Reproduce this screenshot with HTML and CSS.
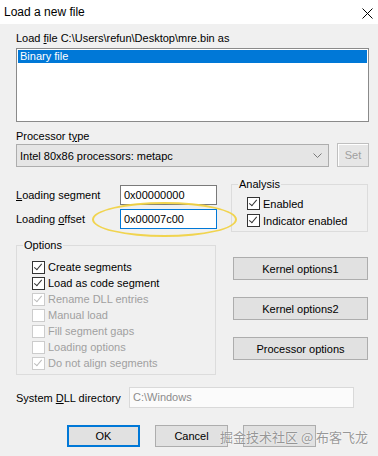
FILE: index.html
```html
<!DOCTYPE html>
<html lang="en">
<head>
  <meta charset="UTF-8">
  <title>Load a new file</title>
  <link rel="stylesheet" href="styles.css">
</head>
<body>
  <div class="dialog">
    <div class="titlebar">
      <span class="title">Load a new file</span>
      <svg class="close" width="11" height="11" viewBox="0 0 11 11"><path d="M0.5 0.5 L10.5 10.5 M10.5 0.5 L0.5 10.5" stroke="#000" stroke-width="1"/></svg>
    </div>
    <div class="content">
      <div class="label file-label">Load <u>f</u>ile C:\Users\refun\Desktop\mre.bin as</div>
      <div class="listbox">
        <div class="list-item selected">Binary file</div>
      </div>

      <div class="label proc-label">Processor t<u>y</u>pe</div>
      <div class="proc-row">
        <div class="combo">
          <span>Intel 80x86 processors: metapc</span>
          <svg width="9" height="5" viewBox="0 0 9 5"><path d="M0.5 0.5 L4.5 4.5 L8.5 0.5" fill="none" stroke="#7a7a7a"/></svg>
        </div>
        <button class="btn btn-set" disabled>Set</button>
      </div>

      <div class="middle">
        <div class="fields">
          <div class="field-row">
            <span class="field-label"><u>L</u>oading segment</span>
            <div class="textbox">0x00000000</div>
          </div>
          <div class="field-row">
            <span class="field-label">Loading <u>o</u>ffset</span>
            <div class="textbox focused">0x00007c00</div>
          </div>
        </div>
        <div class="group analysis">
          <div class="group-title">Analysis</div>
          <div class="group-body">
            <div class="check-row"><span class="check on"></span>Enabled</div>
            <div class="check-row"><span class="check on"></span>Indicator enabled</div>
          </div>
        </div>
      </div>

      <div class="options-row">
        <div class="group options">
          <div class="group-title">Options</div>
          <div class="group-body">
            <div class="check-row"><span class="check on"></span>Create segments</div>
            <div class="check-row"><span class="check on"></span>Load as code segment</div>
            <div class="check-row disabled"><span class="check on"></span>Rename DLL entries</div>
            <div class="check-row disabled"><span class="check"></span>Manual load</div>
            <div class="check-row disabled"><span class="check"></span>Fill segment gaps</div>
            <div class="check-row disabled"><span class="check"></span>Loading options</div>
            <div class="check-row disabled"><span class="check on"></span>Do not align segments</div>
          </div>
        </div>
        <div class="side-buttons">
          <button class="btn btn-side">Kernel options1</button>
          <button class="btn btn-side">Kernel options2</button>
          <button class="btn btn-side">Processor options</button>
        </div>
      </div>

      <div class="dll-row">
        <span class="field-label">System <u>D</u>LL directory</span>
        <div class="textbox readonly">C:\Windows</div>
      </div>

      <div class="actions">
        <button class="btn btn-action default">OK</button>
        <button class="btn btn-action">Cancel</button>
        <button class="btn btn-action" aria-label="Help"></button>
      </div>
    </div>

    <div class="highlight"></div>
    <div class="watermark">掘金技术社区 @ 布客飞龙</div>
  </div>
</body>
</html>
```

FILE: styles.css
```css
:root {
  --face: #f0f0f0;
  --btn-bg: #e1e1e1;
  --btn-border: #adadad;
  --accent: #0078d7;
  --group-border: #dcdcdc;
  --disabled: #a0a0a0;
}
body {
  margin: 0;
  width: 378px;
  height: 456px;
  overflow: hidden;
  background: var(--face);
  font-family: "Liberation Sans", Arial, sans-serif;
  font-size: 11px;
  color: #000;
}
.dialog {
  position: relative;
  height: 456px;
}
.titlebar {
  height: 24px;
  background: #fff;
  display: flex;
  align-items: center;
  justify-content: space-between;
  padding: 0 5px 0 4px;
}
.title {
  font-size: 12px;
  padding-bottom: 1px;
}
.close {
  display: block;
  margin-top: 2px;
}
.content {
  padding: 0 9px 0 16px;
}
.label {
  line-height: 14px;
}
.file-label {
  margin-top: 7px;
}
.listbox {
  margin-top: 3px;
  height: 70px;
  background: #fff;
  border: 1px solid #8a8a8a;
  padding: 1px;
}
.list-item {
  height: 13px;
  line-height: 13px;
  padding-left: 2px;
}
.list-item.selected {
  background: var(--accent);
  color: #fff;
}
.proc-label {
  margin-top: 7px;
}
.proc-row {
  display: flex;
  align-items: flex-start;
  margin-top: 1px;
}
.combo {
  width: 313px;
  height: 23px;
  box-sizing: border-box;
  background: #e5e5e5;
  border: 1px solid var(--btn-border);
  display: flex;
  align-items: center;
  justify-content: space-between;
  padding: 0 6px 0 3px;
}
.btn {
  font-family: inherit;
  font-size: 11px;
  color: #000;
  background: var(--btn-bg);
  border: 1px solid var(--btn-border);
  padding: 0;
  margin: 0;
  box-sizing: border-box;
}
.btn-set {
  margin-left: 8px;
  width: 32px;
  height: 24px;
  margin-top: -1px;
  background: #e6e6e6;
  border-color: #bfbfbf;
  color: var(--disabled);
  box-shadow: inset 1px 1px 0 #fff;
}
.middle {
  display: flex;
  align-items: flex-start;
  margin-top: 17px;
}
.fields {
  padding-top: 1px;
  display: flex;
  flex-direction: column;
  gap: 4px;
}
.field-row {
  display: flex;
  align-items: center;
  height: 20px;
}
.field-label {
  width: 104px;
}
.textbox {
  width: 97px;
  height: 20px;
  box-sizing: border-box;
  background: #fff;
  border: 1px solid #7a7a7a;
  padding-left: 3px;
  line-height: 18px;
}
.textbox.focused {
  border-color: var(--accent);
}
.group {
  border: 1px solid var(--group-border);
  box-sizing: border-box;
}
.group-title {
  width: fit-content;
  margin: -8px 0 0 6px;
  padding: 0 1px;
  line-height: 14px;
  background: var(--face);
}
.analysis {
  width: 137px;
  margin-left: auto;
  margin-right: 1px;
}
.analysis .group-body {
  padding: 4px 0 2px 15px;
}
.check-row {
  display: flex;
  align-items: center;
  height: 17px;
}
.check {
  width: 13px;
  height: 13px;
  box-sizing: border-box;
  border: 1px solid #333;
  background: #fff;
  margin-right: 3px;
  position: relative;
}
.check.on::after {
  content: "";
  position: absolute;
  left: 3px;
  top: 0px;
  width: 3px;
  height: 7px;
  border: solid #333;
  border-width: 0 1px 1px 0;
  transform: rotate(40deg);
}
.check-row.disabled {
  color: var(--disabled);
}
.check-row.disabled .check {
  border-color: #cccccc;
}
.check-row.disabled .check.on::after {
  border-color: #bcbcbc;
}
.options-row {
  display: flex;
  align-items: flex-start;
  margin-top: 13px;
}
.options {
  width: 200px;
}
.options .group-body {
  padding: 7px 0 3px 15px;
}
.options .check-row {
  height: 16px;
}
.side-buttons {
  margin-left: 17px;
  padding-top: 12px;
  display: flex;
  flex-direction: column;
  gap: 17px;
}
.btn-side {
  width: 135px;
  height: 23px;
}
.dll-row {
  display: flex;
  align-items: center;
  margin-top: 12px;
  height: 21px;
}
.dll-row .field-label {
  width: 113px;
}
.textbox.readonly {
  width: 225px;
  height: 21px;
  background: #fbfbfb;
  border-color: #d9d9d9;
  color: #8c8c8c;
}
.actions {
  display: flex;
  gap: 15px;
  margin-top: 17px;
  padding-left: 51px;
}
.btn-action {
  width: 73px;
  height: 22px;
}
.btn-action.default {
  border: 2px solid var(--accent);
}
.highlight {
  position: absolute;
  left: 92px;
  top: 202px;
  width: 145px;
  height: 35px;
  box-sizing: border-box;
  border: 2px solid rgba(240, 210, 70, 0.95);
  border-radius: 50%;
}
.watermark {
  position: absolute;
  left: 220px;
  top: 429px;
  font-family: "Noto Sans CJK SC", sans-serif;
  font-size: 13px;
  line-height: 16px;
  color: rgba(120, 120, 120, 0.75);
  text-shadow: 0 0 2px #fff;
}
```
